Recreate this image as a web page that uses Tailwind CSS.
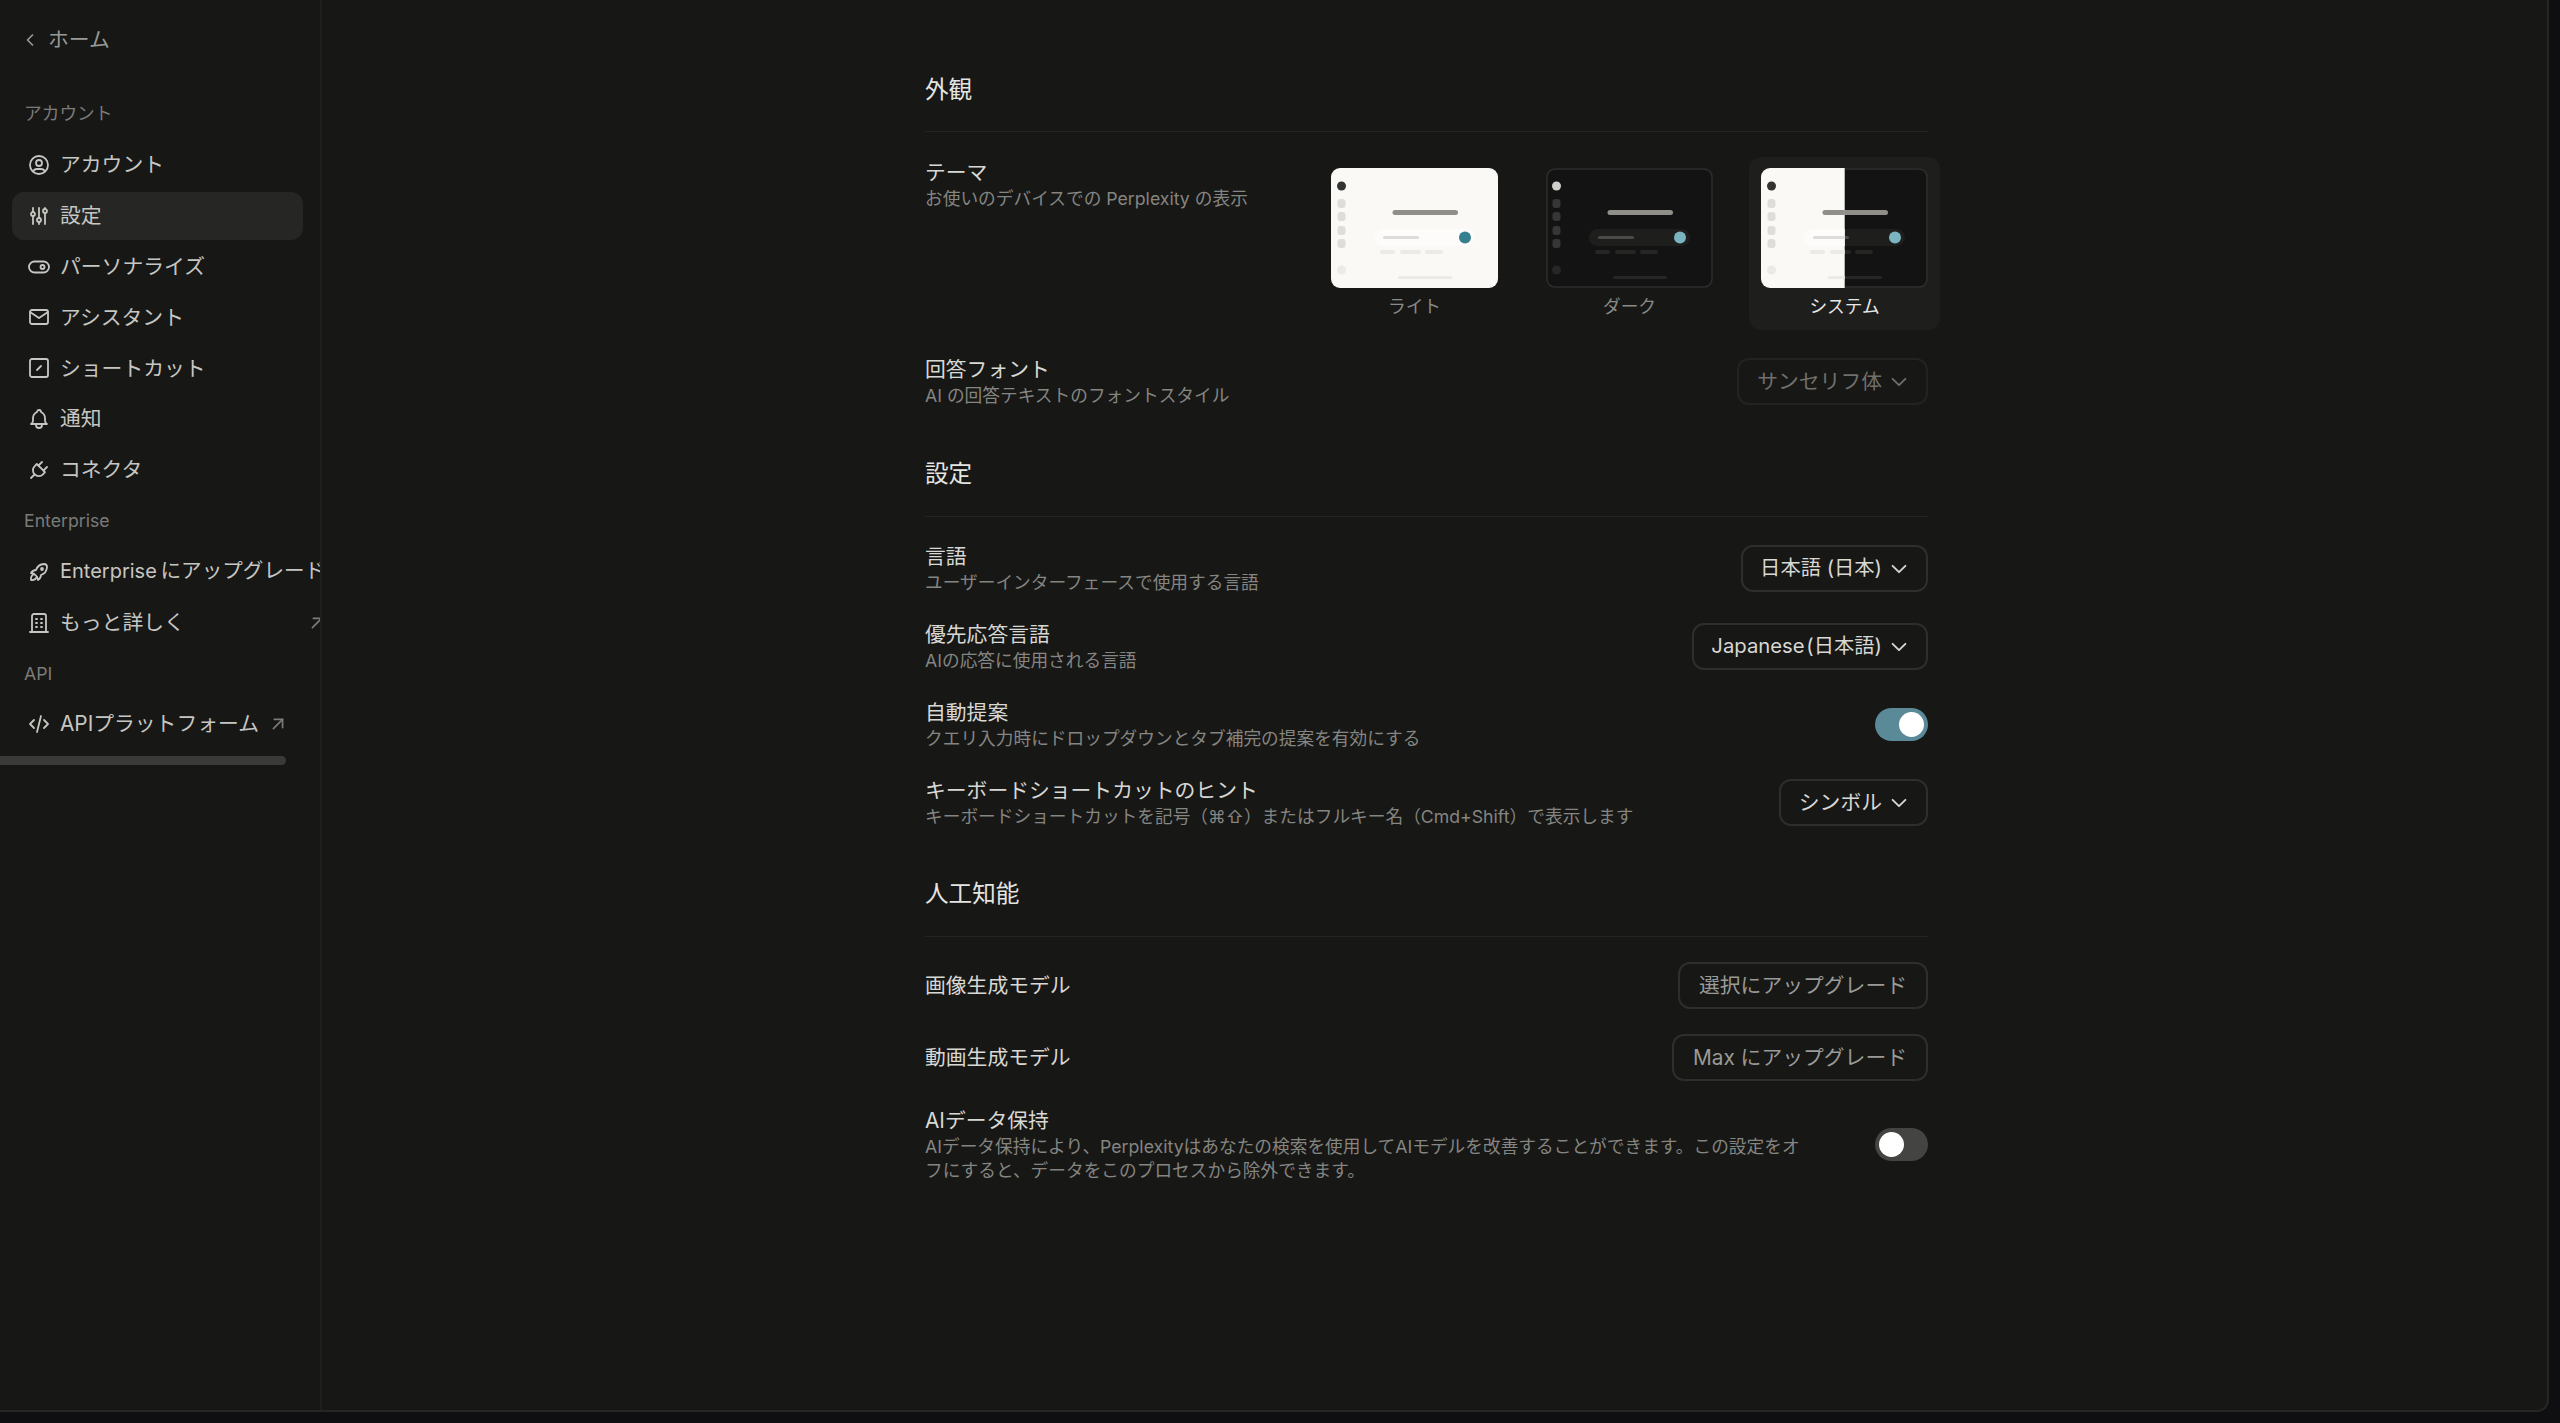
<!DOCTYPE html>
<html lang="ja">
  <head>
    <meta charset="UTF-8" />
    <meta name="viewport" content="width=device-width, initial-scale=1.0" />
    <title>設定</title>
    <script src="https://cdn.jsdelivr.net/npm/@tailwindcss/browser@4"></script>
  </head>
  <body class="bg-[#0f0f11] font-['Inter','Noto_Sans_CJK_JP',sans-serif] overflow-hidden">
    <div class="w-[2549px] h-[1412px] flex bg-[#171716] border-r-2 border-b-2 border-[#262626] rounded-br-[12px] overflow-hidden">
      <!-- SIDEBAR -->
      <aside class="w-[322px] shrink-0 border-r-2 border-[#1f1f1f] overflow-hidden">
        <a class="flex items-center h-[29px] mt-[25px] ml-[20px] gap-[8px] text-[20.8px] text-[#9a9a96]">
          <svg class="w-[20px] h-[20px]" viewBox="0 0 24 24" fill="none" stroke="currentColor" stroke-width="2" stroke-linecap="round" stroke-linejoin="round"><path d="M15 6l-6 6l6 6" /></svg>
          ホーム
        </a>

        <p class="mt-[47px] ml-[24px] h-[26px] leading-[26px] text-[17.7px] text-[#7b7b77]">アカウント</p>
        <nav class="mt-[14px] flex flex-col gap-[2.8px] text-[20.8px] text-[#c6c6c2]">
          <a class="flex items-center h-[48px] w-[291px] ml-[12px] pl-[15px] gap-[9px] rounded-[12px]">
            <svg class="w-[24px] h-[24px] shrink-0" viewBox="0 0 24 24" fill="none" stroke="currentColor" stroke-width="1.8" stroke-linecap="round" stroke-linejoin="round"><path d="M3 12a9 9 0 1 0 18 0a9 9 0 1 0 -18 0" /><path d="M9 10a3 3 0 1 0 6 0a3 3 0 1 0 -6 0" /><path d="M6.2 18.4a4 4 0 0 1 3.8 -2.4h4a4 4 0 0 1 3.8 2.4" /></svg>
            アカウント
          </a>
          <a class="flex items-center h-[48px] w-[291px] ml-[12px] pl-[15px] gap-[9px] rounded-[12px] bg-[#262625]">
            <svg class="w-[24px] h-[24px] shrink-0" viewBox="0 0 24 24" fill="none" stroke="currentColor" stroke-width="1.8" stroke-linecap="round" stroke-linejoin="round"><path d="M4 10a2 2 0 1 0 4 0a2 2 0 0 0 -4 0" /><path d="M6 4v4" /><path d="M6 12v8" /><path d="M10 16a2 2 0 1 0 4 0a2 2 0 0 0 -4 0" /><path d="M12 4v10" /><path d="M12 18v2" /><path d="M16 7a2 2 0 1 0 4 0a2 2 0 0 0 -4 0" /><path d="M18 4v1" /><path d="M18 9v11" /></svg>
            設定
          </a>
          <a class="flex items-center h-[48px] w-[291px] ml-[12px] pl-[15px] gap-[9px] rounded-[12px]">
            <svg class="w-[24px] h-[24px] shrink-0" viewBox="0 0 24 24" fill="none" stroke="currentColor" stroke-width="1.8" stroke-linecap="round" stroke-linejoin="round"><rect x="2" y="6.5" width="20" height="11" rx="5.5" /><circle cx="15.5" cy="12" r="2" /></svg>
            パーソナライズ
          </a>
          <a class="flex items-center h-[48px] w-[291px] ml-[12px] pl-[15px] gap-[9px] rounded-[12px]">
            <svg class="w-[24px] h-[24px] shrink-0" viewBox="0 0 24 24" fill="none" stroke="currentColor" stroke-width="1.8" stroke-linecap="round" stroke-linejoin="round"><path d="M3 7a2 2 0 0 1 2 -2h14a2 2 0 0 1 2 2v10a2 2 0 0 1 -2 2h-14a2 2 0 0 1 -2 -2v-10z" /><path d="M3 7l9 6l9 -6" /></svg>
            アシスタント
          </a>
          <a class="flex items-center h-[48px] w-[291px] ml-[12px] pl-[15px] gap-[9px] rounded-[12px]">
            <svg class="w-[24px] h-[24px] shrink-0" viewBox="0 0 24 24" fill="none" stroke="currentColor" stroke-width="1.8" stroke-linecap="round" stroke-linejoin="round"><rect x="3" y="3" width="18" height="18" rx="2" /><path d="M10 14l4 -4" /></svg>
            ショートカット
          </a>
          <a class="flex items-center h-[48px] w-[291px] ml-[12px] pl-[15px] gap-[9px] rounded-[12px]">
            <svg class="w-[24px] h-[24px] shrink-0" viewBox="0 0 24 24" fill="none" stroke="currentColor" stroke-width="1.8" stroke-linecap="round" stroke-linejoin="round"><path d="M10 5a2 2 0 1 1 4 0a7 7 0 0 1 4 6v3a4 4 0 0 0 2 3h-16a4 4 0 0 0 2 -3v-3a7 7 0 0 1 4 -6" /><path d="M9 17v1a3 3 0 0 0 6 0v-1" /></svg>
            通知
          </a>
          <a class="flex items-center h-[48px] w-[291px] ml-[12px] pl-[15px] gap-[9px] rounded-[12px]">
            <svg class="w-[24px] h-[24px] shrink-0" viewBox="0 0 24 24" fill="none" stroke="currentColor" stroke-width="1.8" stroke-linecap="round" stroke-linejoin="round"><path d="M9.785 6l8.215 8.215l-2.054 2.054a5.81 5.81 0 1 1 -8.215 -8.215l2.054 -2.054z" /><path d="M4 20l3.5 -3.5" /><path d="M15 4l-3.5 3.5" /><path d="M20 9l-3.5 3.5" /></svg>
            コネクタ
          </a>
        </nav>

        <p class="mt-[14px] ml-[24px] h-[26px] leading-[26px] text-[17.7px] text-[#7b7b77]">Enterprise</p>
        <nav class="mt-[14px] flex flex-col gap-[2.8px] text-[20.8px] text-[#c6c6c2]">
          <a class="flex items-center h-[48px] w-[340px] ml-[12px] pl-[15px] gap-[9px] whitespace-nowrap">
            <svg class="w-[24px] h-[24px] shrink-0" viewBox="0 0 24 24" fill="none" stroke="currentColor" stroke-width="1.8" stroke-linecap="round" stroke-linejoin="round"><path d="M4 13a8 8 0 0 1 7 7a6 6 0 0 0 3 -5a9 9 0 0 0 6 -8a3 3 0 0 0 -3 -3a9 9 0 0 0 -8 6a6 6 0 0 0 -5 3" /><path d="M7 14a6 6 0 0 0 -3 6a6 6 0 0 0 6 -3" /><path d="M14 9a1 1 0 1 0 2 0a1 1 0 1 0 -2 0" /></svg>
            <span class="text-[20px] [word-spacing:-2px]">Enterprise <span class="text-[20.6px]">にアップグレード</span></span>
          </a>
          <a class="flex items-center h-[48px] w-[316px] ml-[12px] pl-[15px] gap-[9px] whitespace-nowrap">
            <svg class="w-[24px] h-[24px] shrink-0" viewBox="0 0 24 24" fill="none" stroke="currentColor" stroke-width="1.8" stroke-linecap="round" stroke-linejoin="round"><path d="M3 21l18 0" /><path d="M9 8l1 0" /><path d="M9 12l1 0" /><path d="M9 16l1 0" /><path d="M14 8l1 0" /><path d="M14 12l1 0" /><path d="M14 16l1 0" /><path d="M5 21v-16a2 2 0 0 1 2 -2h10a2 2 0 0 1 2 2v16" /></svg>
            <span class="flex-1">もっと詳しく</span>
            <svg class="w-[22px] h-[22px] shrink-0 text-[#7b7b77]" viewBox="0 0 24 24" fill="none" stroke="currentColor" stroke-width="1.8" stroke-linecap="round" stroke-linejoin="round"><path d="M17 7l-10 10" /><path d="M8 7l9 0l0 9" /></svg>
          </a>
        </nav>

        <p class="mt-[14px] ml-[24px] h-[26px] leading-[26px] text-[17.7px] text-[#7b7b77]">API</p>
        <nav class="mt-[13px] text-[20.8px] text-[#c6c6c2]">
          <a class="flex items-center h-[48px] ml-[12px] pl-[15px] gap-[9px] whitespace-nowrap">
            <svg class="w-[24px] h-[24px] shrink-0" viewBox="0 0 24 24" fill="none" stroke="currentColor" stroke-width="1.8" stroke-linecap="round" stroke-linejoin="round"><path d="M7 8l-4 4l4 4" /><path d="M17 8l4 4l-4 4" /><path d="M14 4l-4 16" /></svg>
            APIプラットフォーム
            <svg class="w-[22px] h-[22px] -ml-[1px] shrink-0 text-[#7b7b77]" viewBox="0 0 24 24" fill="none" stroke="currentColor" stroke-width="1.8" stroke-linecap="round" stroke-linejoin="round"><path d="M17 7l-10 10" /><path d="M8 7l9 0l0 9" /></svg>
          </a>
        </nav>
        <div class="mt-[8px] w-[286px] h-[9px] rounded-r-full bg-[#3a3a39]"></div>
      </aside>

      <!-- MAIN -->
      <main class="ml-[603px] w-[1003px] pt-[73px] shrink-0">
        <!-- appearance -->
        <h2 class="leading-[34px] text-[23.6px] text-[#e4e4e1] pb-[24px] border-b border-[#232322]">外観</h2>
        <div class="mt-[26px] flex justify-between">
          <div>
            <p class="leading-[29px] text-[20.8px] text-[#d8d8d4]">テーマ</p>
            <p class="leading-[24px] text-[17.7px] text-[#858581]">お使いのデバイスでの Perplexity の表示</p>
          </div>
          <div class="flex gap-[24px] -mr-[12px] -mt-[1px]">
            <div class="w-[191px] h-[173px] pt-[11px] flex flex-col items-center rounded-[12px]">
              <svg class="w-[167px] h-[120px]" viewBox="0 0 167 120">
                <rect width="167" height="120" rx="9" fill="#faf9f6" />
                <circle cx="10.5" cy="18" r="4.5" fill="#333331" />
                <rect x="6.5" y="31" width="8" height="9" rx="3" fill="#deddda" />
                <rect x="6.5" y="44" width="8" height="9" rx="3" fill="#deddda" />
                <rect x="6.5" y="58" width="8" height="9" rx="3" fill="#deddda" />
                <rect x="6.5" y="71" width="8" height="9" rx="3" fill="#deddda" />
                <circle cx="10.5" cy="102" r="4.5" fill="#ebeae7" />
                <rect x="61.5" y="42" width="65.5" height="5" rx="2.5" fill="#8f8e89" />
                <rect x="43" y="61" width="101" height="17" rx="8.5" fill="#fdfcfa" />
                <rect x="52" y="68" width="36" height="3" rx="1.5" fill="#dddcd8" />
                <circle cx="134" cy="69.5" r="6" fill="#35808f" />
                <rect x="49" y="82" width="15" height="4" rx="2" fill="#ebeae7" />
                <rect x="69" y="82" width="21" height="4" rx="2" fill="#ebeae7" />
                <rect x="94" y="82" width="18" height="4" rx="2" fill="#ebeae7" />
                <rect x="67" y="108" width="54" height="3" rx="1.5" fill="#ebeae7" />
              </svg>
              <span class="mt-[7px] leading-[24px] text-[17.7px] text-[#8a8a86]">ライト</span>
            </div>
            <div class="w-[191px] h-[173px] pt-[11px] flex flex-col items-center rounded-[12px]">
              <svg class="w-[167px] h-[120px]" viewBox="0 0 167 120">
                <rect x="1" y="1" width="165" height="118" rx="8" fill="#131313" stroke="#2e2e2d" stroke-width="1.5" />
                <circle cx="10.5" cy="18" r="4.5" fill="#cfcfcb" />
                <rect x="6.5" y="31" width="8" height="9" rx="3" fill="#363635" />
                <rect x="6.5" y="44" width="8" height="9" rx="3" fill="#363635" />
                <rect x="6.5" y="58" width="8" height="9" rx="3" fill="#363635" />
                <rect x="6.5" y="71" width="8" height="9" rx="3" fill="#363635" />
                <circle cx="10.5" cy="102" r="4.5" fill="#262625" />
                <rect x="61.5" y="42" width="65.5" height="5" rx="2.5" fill="#8f8e89" />
                <rect x="43" y="61" width="101" height="17" rx="8.5" fill="#1e1e1d" />
                <rect x="52" y="68" width="36" height="3" rx="1.5" fill="#4a4a48" />
                <circle cx="134" cy="69.5" r="6" fill="#7ab4c0" />
                <rect x="49" y="82" width="15" height="4" rx="2" fill="#262625" />
                <rect x="69" y="82" width="21" height="4" rx="2" fill="#262625" />
                <rect x="94" y="82" width="18" height="4" rx="2" fill="#262625" />
                <rect x="67" y="108" width="54" height="3" rx="1.5" fill="#262625" />
              </svg>
              <span class="mt-[7px] leading-[24px] text-[17.7px] text-[#8a8a86]">ダーク</span>
            </div>
            <div class="w-[191px] h-[173px] pt-[11px] flex flex-col items-center rounded-[12px] bg-[#1e1e1d]">
              <svg class="w-[167px] h-[120px]" viewBox="0 0 167 120">
                <defs>
                  <clipPath id="half-left"><rect width="83.7" height="120" /></clipPath>
                  <clipPath id="half-right"><rect x="83.7" width="83.3" height="120" /></clipPath>
                </defs>
                <g clip-path="url(#half-right)">
                  <rect x="1" y="1" width="165" height="118" rx="8" fill="#131313" stroke="#2e2e2d" stroke-width="1.5" />
                  <rect x="61.5" y="42" width="65.5" height="5" rx="2.5" fill="#8f8e89" />
                  <rect x="43" y="61" width="101" height="17" rx="8.5" fill="#1e1e1d" />
                  <rect x="52" y="68" width="36" height="3" rx="1.5" fill="#4a4a48" />
                  <circle cx="134" cy="69.5" r="6" fill="#7ab4c0" />
                  <rect x="69" y="82" width="21" height="4" rx="2" fill="#262625" />
                  <rect x="94" y="82" width="18" height="4" rx="2" fill="#262625" />
                  <rect x="67" y="108" width="54" height="3" rx="1.5" fill="#262625" />
                </g>
                <g clip-path="url(#half-left)">
                  <rect width="167" height="120" rx="9" fill="#faf9f6" />
                  <circle cx="10.5" cy="18" r="4.5" fill="#333331" />
                  <rect x="6.5" y="31" width="8" height="9" rx="3" fill="#deddda" />
                  <rect x="6.5" y="44" width="8" height="9" rx="3" fill="#deddda" />
                  <rect x="6.5" y="58" width="8" height="9" rx="3" fill="#deddda" />
                  <rect x="6.5" y="71" width="8" height="9" rx="3" fill="#deddda" />
                  <circle cx="10.5" cy="102" r="4.5" fill="#ebeae7" />
                  <rect x="61.5" y="42" width="65.5" height="5" rx="2.5" fill="#8f8e89" />
                  <rect x="43" y="61" width="101" height="17" rx="8.5" fill="#fdfcfa" />
                  <rect x="52" y="68" width="36" height="3" rx="1.5" fill="#dddcd8" />
                  <rect x="49" y="82" width="15" height="4" rx="2" fill="#ebeae7" />
                  <rect x="69" y="82" width="21" height="4" rx="2" fill="#ebeae7" />
                  <rect x="67" y="108" width="54" height="3" rx="1.5" fill="#ebeae7" />
                </g>
              </svg>
              <span class="mt-[7px] leading-[24px] text-[17.7px] text-[#e8e8e5]">システム</span>
            </div>
          </div>
        </div>
        <div class="mt-[25px] flex justify-between items-center">
          <div>
            <p class="leading-[29px] text-[20.8px] text-[#d8d8d4]">回答フォント</p>
            <p class="leading-[24px] text-[17.7px] text-[#858581]">AI の回答テキストのフォントスタイル</p>
          </div>
          <button class="flex items-center h-[47px] pl-[18px] pr-[16px] gap-[6px] rounded-[12px] border-2 border-[#232322] text-[20.8px] text-[#6f6f6b]">
            サンセリフ体
            <svg class="w-[22px] h-[22px]" viewBox="0 0 24 24" fill="none" stroke="currentColor" stroke-width="2" stroke-linecap="round" stroke-linejoin="round"><path d="M5 8.5l7 7l7 -7" /></svg>
          </button>
        </div>

        <!-- preferences -->
        <h2 class="mt-[49px] leading-[34px] text-[23.6px] text-[#e4e4e1] pb-[25px] border-b border-[#232322]">設定</h2>
        <div class="mt-[25px] flex flex-col gap-[25px]">
          <div class="flex justify-between items-center">
            <div>
              <p class="leading-[29px] text-[20.8px] text-[#d8d8d4]">言語</p>
              <p class="leading-[24px] text-[17.7px] text-[#858581]">ユーザーインターフェースで使用する言語</p>
            </div>
            <button class="flex items-center h-[47px] pl-[17px] pr-[16px] gap-[6px] rounded-[12px] border-2 border-[#2e2e2d] text-[20.3px] text-[#d8d8d4]">
              日本語 (日本)
              <svg class="w-[22px] h-[22px]" viewBox="0 0 24 24" fill="none" stroke="currentColor" stroke-width="2" stroke-linecap="round" stroke-linejoin="round"><path d="M5 8.5l7 7l7 -7" /></svg>
            </button>
          </div>
          <div class="flex justify-between items-center">
            <div>
              <p class="leading-[29px] text-[20.8px] text-[#d8d8d4]">優先応答言語</p>
              <p class="leading-[24px] text-[17.7px] text-[#858581]">AIの応答に使用される言語</p>
            </div>
            <button class="flex items-center h-[47px] pl-[17px] pr-[16px] gap-[6px] rounded-[12px] border-2 border-[#2e2e2d] text-[20.3px] text-[#d8d8d4] [word-spacing:-4px]">
              Japanese (日本語)
              <svg class="w-[22px] h-[22px]" viewBox="0 0 24 24" fill="none" stroke="currentColor" stroke-width="2" stroke-linecap="round" stroke-linejoin="round"><path d="M5 8.5l7 7l7 -7" /></svg>
            </button>
          </div>
          <div class="flex justify-between items-center">
            <div>
              <p class="leading-[29px] text-[20.8px] text-[#d8d8d4]">自動提案</p>
              <p class="leading-[24px] text-[17.7px] text-[#858581]">クエリ入力時にドロップダウンとタブ補完の提案を有効にする</p>
            </div>
            <div class="w-[53px] h-[33px] rounded-full bg-[#5a8a98] flex items-center justify-end pr-[4px]">
              <div class="w-[25px] h-[25px] rounded-full bg-white"></div>
            </div>
          </div>
          <div class="flex justify-between items-center">
            <div>
              <p class="leading-[29px] text-[20.8px] text-[#d8d8d4]">キーボードショートカットのヒント</p>
              <p class="leading-[24px] text-[17.7px] text-[#858581]">キーボードショートカットを記号（⌘⇧）またはフルキー名（Cmd+Shift）で表示します</p>
            </div>
            <button class="flex items-center h-[47px] pl-[18px] pr-[16px] gap-[6px] rounded-[12px] border-2 border-[#2e2e2d] text-[20.8px] text-[#d8d8d4]">
              シンボル
              <svg class="w-[22px] h-[22px]" viewBox="0 0 24 24" fill="none" stroke="currentColor" stroke-width="2" stroke-linecap="round" stroke-linejoin="round"><path d="M5 8.5l7 7l7 -7" /></svg>
            </button>
          </div>
        </div>

        <!-- ai -->
        <h2 class="mt-[48px] leading-[34px] text-[23.6px] text-[#e4e4e1] pb-[25px] border-b border-[#232322]">人工知能</h2>
        <div class="mt-[25px] flex flex-col gap-[25px]">
          <div class="flex justify-between items-center">
            <p class="text-[20.8px] text-[#d8d8d4]">画像生成モデル</p>
            <button class="h-[47px] px-[19px] rounded-[12px] border-2 border-[#2e2e2d] text-[20.8px] text-[#9a9a96]">選択にアップグレード</button>
          </div>
          <div class="flex justify-between items-center">
            <p class="text-[20.8px] text-[#d8d8d4]">動画生成モデル</p>
            <button class="h-[47px] px-[19px] rounded-[12px] border-2 border-[#2e2e2d] text-[20.8px] text-[#9a9a96]">Max にアップグレード</button>
          </div>
          <div class="flex justify-between items-center">
            <div class="w-[888px]">
              <p class="leading-[29px] text-[20.8px] text-[#d8d8d4]">AIデータ保持</p>
              <p class="leading-[24px] text-[17.7px] text-[#858581]">AIデータ保持により、Perplexityはあなたの検索を使用してAIモデルを改善することができます。この設定をオフにすると、データをこのプロセスから除外できます。</p>
            </div>
            <div class="w-[53px] h-[33px] rounded-full bg-[#444443] flex items-center pl-[4px]">
              <div class="w-[25px] h-[25px] rounded-full bg-white"></div>
            </div>
          </div>
        </div>
      </main>
    </div>
  </body>
</html>
